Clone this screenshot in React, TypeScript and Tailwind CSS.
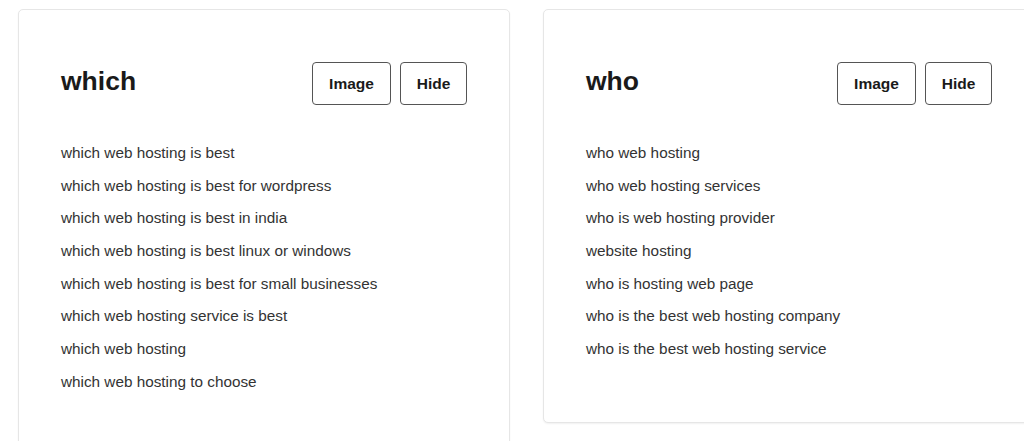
import React from 'react';

const groups = [
  {
    title: 'which',
    items: [
      'which web hosting is best',
      'which web hosting is best for wordpress',
      'which web hosting is best in india',
      'which web hosting is best linux or windows',
      'which web hosting is best for small businesses',
      'which web hosting service is best',
      'which web hosting',
      'which web hosting to choose',
    ],
  },
  {
    title: 'who',
    items: [
      'who web hosting',
      'who web hosting services',
      'who is web hosting provider',
      'website hosting',
      'who is hosting web page',
      'who is the best web hosting company',
      'who is the best web hosting service',
    ],
  },
];

const QuestionCard: React.FC<{ title: string; items: string[] }> = ({ title, items }) => (
  <div className="w-[492px] shrink-0 self-start rounded-[5px] border border-[#e6e6e6] bg-white px-[42px] pt-[52px] pb-[63px] shadow-[0_1px_2px_rgba(0,0,0,0.06)]">
    <div className="flex items-center justify-between">
      <h2 className="-mt-[4px] text-[26.5px] font-bold leading-none text-[#1a1a1a]">{title}</h2>
      <div className="flex gap-[9px]">
        <button className="h-[43px] w-[79px] rounded-[4px] border border-[#555] bg-white text-[15.5px] font-bold text-[#1a1a1a]">
          Image
        </button>
        <button className="h-[43px] w-[67px] rounded-[4px] border border-[#555] bg-white text-[15.5px] font-bold text-[#1a1a1a]">
          Hide
        </button>
      </div>
    </div>
    <ul className="mt-[38px] flex flex-col gap-[12.7px]">
      {items.map((item) => (
        <li key={item} className="text-[15.3px] leading-[20px] text-[#333]">
          {item}
        </li>
      ))}
    </ul>
  </div>
);

export default function App() {
  return (
    <div className="h-[441px] w-[1024px] overflow-hidden bg-white font-['Liberation_Sans',Arial,sans-serif]">
      <div className="flex gap-[33px] pl-[18px] pt-[9px]">
        {groups.map((g) => (
          <QuestionCard key={g.title} title={g.title} items={g.items} />
        ))}
      </div>
    </div>
  );
}
